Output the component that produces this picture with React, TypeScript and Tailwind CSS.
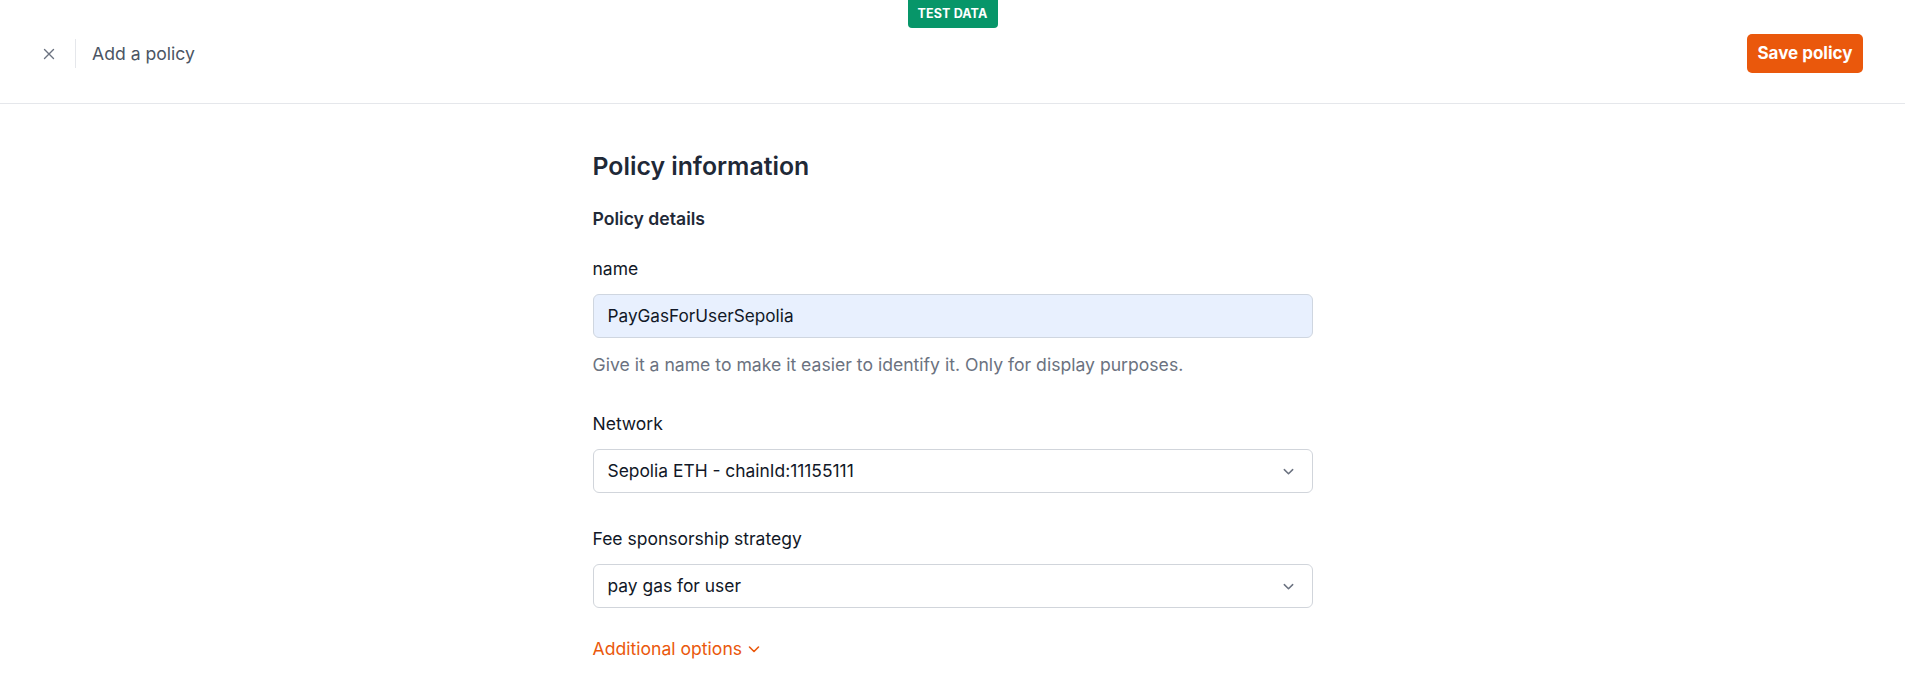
import React from "react";

function XIcon() {
  return (
    <svg width="12" height="12" viewBox="0 0 12 12" fill="none" stroke="#6b7280" strokeWidth="1.4" strokeLinecap="round">
      <path d="M1.5 1.5 L10.5 10.5 M10.5 1.5 L1.5 10.5" />
    </svg>
  );
}

function Chevron({ color = "#6b7280", size = 13 }: { color?: string; size?: number }) {
  return (
    <svg width={size} height={size} viewBox="0 0 14 14" fill="none" stroke={color} strokeWidth="1.6" strokeLinecap="round" strokeLinejoin="round">
      <path d="M2.5 5 L7 9.5 L11.5 5" />
    </svg>
  );
}

function SelectBox({ value }: { value: string }) {
  return (
    <div className="flex h-[44px] w-full items-center justify-between rounded-[6px] border border-[#d1d5db] bg-white pl-[14px] pr-[17px] text-[17.4px] leading-[24px] text-[#111827] proportional-nums">
      <span>{value}</span>
      <Chevron />
    </div>
  );
}

export default function App() {
  return (
    <div className="min-h-[695px] bg-white text-[#111827]" style={{ fontFamily: "Inter, 'Noto Sans', sans-serif" }}>
      <div className="relative flex h-[104px] items-center justify-between border-b border-[#e5e7eb] px-[42px] pt-[4px]">
        <div className="absolute left-1/2 top-0 flex h-[28px] w-[90px] -translate-x-1/2 items-center justify-center rounded-b-[4px] bg-[#079669] text-[12.5px] font-bold tracking-[0.01em] text-white">
          TEST DATA
        </div>
        <div className="flex items-center">
          <div className="flex h-[12px] w-[14px] items-center justify-center">
            <XIcon />
          </div>
          <div className="ml-[19px] h-[29px] w-px bg-[#e5e7eb]" />
          <span className="ml-[16px] text-[17.6px] leading-[24px] text-[#4b5563]">Add a policy</span>
        </div>
        <button className="flex h-[39px] w-[116px] items-center justify-center rounded-[5px] bg-[#ea580c] text-[17px] font-bold text-white">
          Save policy
        </button>
      </div>

      <div className="mx-auto w-[720px] pt-[46px]">
        <h1 className="text-[24.8px] font-semibold leading-[32px] text-[#1f2937]">Policy information</h1>
        <h2 className="mt-[25px] text-[17.6px] font-semibold leading-[24px] text-[#1f2937]">Policy details</h2>

        <div className="mt-[26px]">
          <label className="block text-[17.5px] leading-[24px]">name</label>
          <div className="mt-[13px] flex h-[44px] items-center rounded-[6px] border border-[#cfd6e0] bg-[#e8f0fe] px-[14px] text-[17.2px] leading-[24px] text-[#111827]">
            PayGasForUserSepolia
          </div>
          <p className="mt-[15px] text-[17.6px] leading-[24px] text-[#6b7280]">
            Give it a name to make it easier to identify it. Only for display purposes.
          </p>
        </div>

        <div className="mt-[35px]">
          <label className="block text-[17.5px] leading-[24px]">Network</label>
          <div className="mt-[13px]">
            <SelectBox value="Sepolia ETH - chainId:11155111" />
          </div>
        </div>

        <div className="mt-[34px]">
          <label className="block text-[17.5px] leading-[24px]">Fee sponsorship strategy</label>
          <div className="mt-[13px]">
            <SelectBox value="pay gas for user" />
          </div>
        </div>

        <button className="mt-[29px] flex items-center gap-[5px] text-[17.6px] leading-[24px] text-[#ea580c]">
          Additional options
          <Chevron color="#ea580c" size={14} />
        </button>
      </div>
    </div>
  );
}
